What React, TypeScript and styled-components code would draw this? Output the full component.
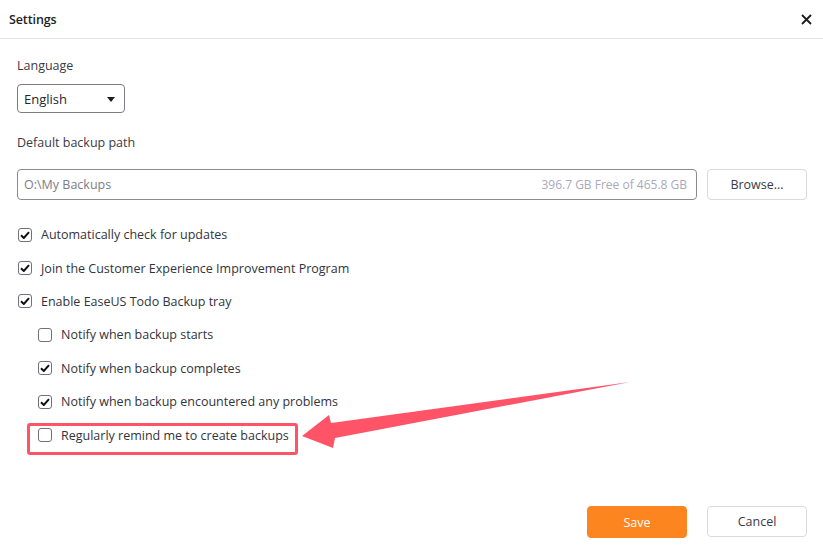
import styled, { createGlobalStyle } from "styled-components";

const GlobalStyle = createGlobalStyle`
  html, body {
    margin: 0;
    padding: 0;
    background: #fff;
  }
  body {
    font-family: "Open Sans", "Noto Sans", sans-serif;
    color: #3a3a46;
  }
`;

interface IOption {
  label: string;
  checked: boolean;
  nested?: boolean;
  highlighted?: boolean;
}

const options: IOption[] = [
  { label: "Automatically check for updates", checked: true },
  { label: "Join the Customer Experience Improvement Program", checked: true },
  { label: "Enable EaseUS Todo Backup tray", checked: true },
  { label: "Notify when backup starts", checked: false, nested: true },
  { label: "Notify when backup completes", checked: true, nested: true },
  {
    label: "Notify when backup encountered any problems",
    checked: true,
    nested: true,
  },
  {
    label: "Regularly remind me to create backups",
    checked: false,
    nested: true,
    highlighted: true,
  },
];

const Window = styled.div`
  position: relative;
  width: 823px;
  height: 553px;
  display: flex;
  flex-direction: column;
  overflow: hidden;
`;

const Header = styled.div`
  height: 38px;
  display: flex;
  align-items: center;
  justify-content: space-between;
  padding: 0 9px;
  border-bottom: 1px solid #dfe4ec;
  flex-shrink: 0;
`;

const Title = styled.h1`
  margin: 0;
  font-size: 12.5px;
  font-weight: 600;
  color: #1e1e24;
  letter-spacing: -0.1px;
`;

const CloseButton = styled.button`
  width: 14px;
  height: 14px;
  padding: 0;
  border: 0;
  background: none;
  display: flex;
  align-items: center;
  justify-content: center;
  margin-right: 1px;
`;

const Body = styled.div`
  flex: 1;
  padding: 18px 16px 0 17px;
  display: flex;
  flex-direction: column;
`;

const Label = styled.div<{ gap: number }>`
  font-size: 12.5px;
  line-height: 18px;
  margin-bottom: ${({ gap }) => gap}px;
`;

const Select = styled.div`
  width: 108px;
  height: 29px;
  box-sizing: border-box;
  border: 1px solid #7c7c88;
  border-radius: 4px;
  display: flex;
  align-items: center;
  justify-content: space-between;
  padding: 0 9px 0 6px;
  font-size: 13px;
  color: #26262e;
  margin-bottom: 21px;
`;

const Caret = styled.span`
  width: 0;
  height: 0;
  border-left: 4px solid transparent;
  border-right: 4px solid transparent;
  border-top: 5px solid #1c1c1c;
  margin-top: 1px;
`;

const PathRow = styled.div`
  display: flex;
  gap: 10px;
  margin-bottom: 18px;
`;

const PathInput = styled.div`
  flex: 1;
  height: 31px;
  box-sizing: border-box;
  border: 1px solid #8a8a96;
  border-radius: 4px;
  display: flex;
  align-items: center;
  justify-content: space-between;
  padding: 0 9px 0 6px;
  font-size: 12.5px;
`;

const PathText = styled.span`
  color: #7d7d88;
`;

const FreeText = styled.span`
  color: #a9a9b8;
  font-size: 12px;
`;

const Button = styled.button<{ primary?: boolean }>`
  width: 100px;
  height: ${({ primary }) => (primary ? 32 : 31)}px;
  box-sizing: border-box;
  border-radius: 4px;
  font-family: inherit;
  font-size: 12.5px;
  cursor: pointer;
  border: 1px solid ${({ primary }) => (primary ? "#fd8520" : "#d9d9de")};
  background: ${({ primary }) => (primary ? "#fd8520" : "#fff")};
  color: ${({ primary }) => (primary ? "#fff" : "#3a3a46")};
`;

const OptionList = styled.div`
  display: flex;
  flex-direction: column;
`;

const OptionRow = styled.div<{ nested?: boolean }>`
  height: 33.4px;
  display: flex;
  align-items: center;
  padding-left: ${({ nested }) => (nested ? 21 : 1)}px;
`;

const Highlight = styled.div`
  display: flex;
  align-items: center;
  height: 32px;
  box-sizing: border-box;
  margin-left: -11px;
  margin-top: 7px;
  padding: 0 6px 7px 8px;
  border: 3px solid #ff5468;
  border-radius: 3px;
`;

const Box = styled.span`
  width: 14px;
  height: 14px;
  box-sizing: border-box;
  border: 1px solid #70707e;
  border-radius: 3px;
  display: flex;
  align-items: center;
  justify-content: center;
  margin-right: 9px;
  flex-shrink: 0;
`;

const OptionText = styled.span`
  font-size: 12.5px;
  color: #33333d;
  white-space: nowrap;
`;

const Footer = styled.div`
  display: flex;
  justify-content: flex-end;
  gap: 20px;
  padding: 0 16px 15px 0;
`;

const ArrowLayer = styled.svg`
  position: absolute;
  left: 0;
  top: 0;
  pointer-events: none;
`;

const Check = () => (
  <svg width="10" height="8" viewBox="0 0 10 8">
    <path
      d="M1 4.2 L3.8 7 L9 1.2"
      fill="none"
      stroke="#111"
      strokeWidth="2"
    />
  </svg>
);

const Option = ({ option }: { option: IOption }) => {
  const content = (
    <>
      <Box>{option.checked && <Check />}</Box>
      <OptionText>{option.label}</OptionText>
    </>
  );

  return (
    <OptionRow nested={option.nested}>
      {option.highlighted ? <Highlight>{content}</Highlight> : content}
    </OptionRow>
  );
};

export default function App() {
  return (
    <>
      <GlobalStyle />
      <Window>
        <Header>
          <Title>Settings</Title>
          <CloseButton aria-label="Close">
            <svg width="11" height="11" viewBox="0 0 11 11">
              <path
                d="M1 1 L10 10 M10 1 L1 10"
                stroke="#1c1c1c"
                strokeWidth="1.8"
              />
            </svg>
          </CloseButton>
        </Header>
        <Body>
          <Label gap={9}>Language</Label>
          <Select>
            English
            <Caret />
          </Select>
          <Label gap={17}>Default backup path</Label>
          <PathRow>
            <PathInput>
              <PathText>O:\My Backups</PathText>
              <FreeText>396.7 GB Free of 465.8 GB</FreeText>
            </PathInput>
            <Button>Browse...</Button>
          </PathRow>
          <OptionList>
            {options.map((option) => (
              <Option key={option.label} option={option} />
            ))}
          </OptionList>
        </Body>
        <Footer>
          <Button primary>Save</Button>
          <Button>Cancel</Button>
        </Footer>
        <ArrowLayer width="823" height="553">
          <polygon
            points="302,436 329,415 331,423 630,382 335,438 333,448"
            fill="#ff5468"
          />
        </ArrowLayer>
      </Window>
    </>
  );
}
